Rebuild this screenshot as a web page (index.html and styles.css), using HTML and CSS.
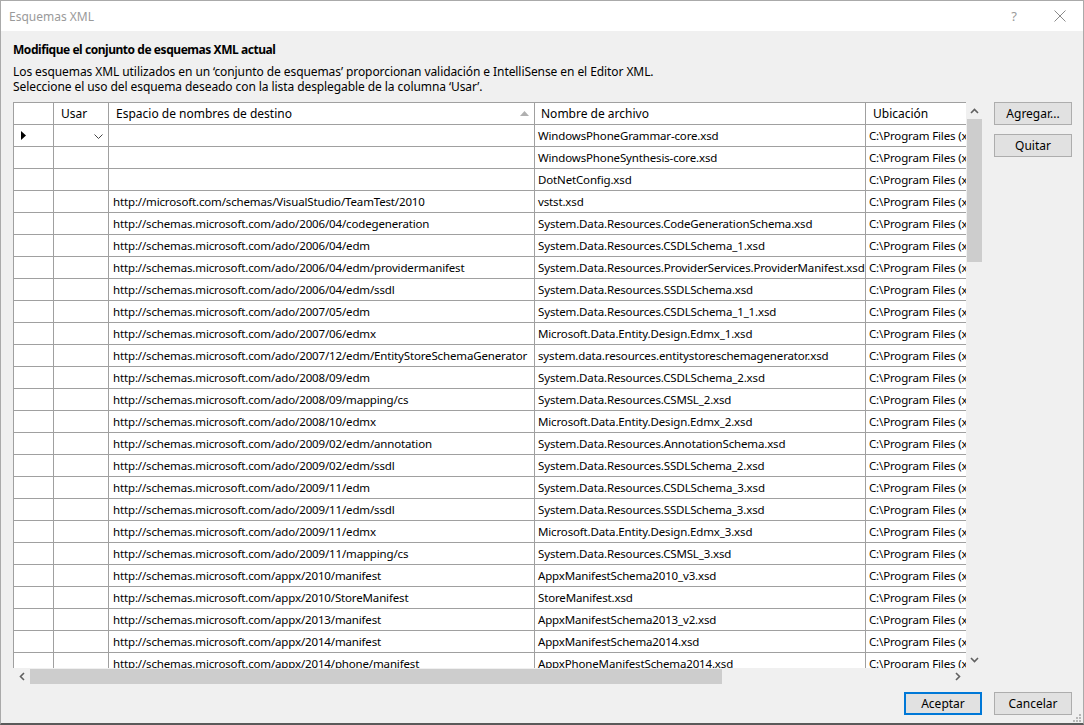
FILE: index.html
```html
<!DOCTYPE html>
<html lang="es">
<head>
<meta charset="utf-8">
<title>Esquemas XML</title>
<link rel="stylesheet" href="styles.css">
</head>
<body>
<div class="win">
  <div class="titlebar">
    <span class="title">Esquemas XML</span>
    <span class="tb-btn help">?</span>
    <span class="tb-btn close"><svg width="12" height="12" viewBox="0 0 12 12"><path d="M0.5 0.5 L11.5 11.5 M11.5 0.5 L0.5 11.5" stroke="#8a8a8a" stroke-width="1" fill="none"/></svg></span>
  </div>
  <div class="content">
    <div class="heading">Modifique el conjunto de esquemas XML actual</div>
    <div class="desc">Los esquemas XML utilizados en un ‘conjunto de esquemas’ proporcionan validación e IntelliSense en el Editor XML.<br>Seleccione el uso del esquema deseado con la lista desplegable de la columna ‘Usar’.</div>
    <div class="main">
      <div class="grid">
        <div class="gridtop">
          <div class="viewport">
            <div class="r hr">
              <div class="c c0"></div>
              <div class="c c1 h">Usar</div>
              <div class="c c2 h sortcol">Espacio de nombres de destino<svg class="sort" width="9" height="5" viewBox="0 0 9 5"><path d="M0 5 L4.5 0 L9 5 Z" fill="#b0b0b0"/></svg></div>
              <div class="c c3 h">Nombre de archivo</div>
              <div class="c c4 h">Ubicación</div>
            </div>
            <div class="r"><div class="c c0 cur"><svg width="5" height="9" viewBox="0 0 5 9"><path d="M0 0 L5 4.5 L0 9 Z" fill="#000"/></svg></div><div class="c c1 combo"><svg class="chev" width="9" height="5" viewBox="0 0 9 5"><path d="M0.5 0.5 L4.5 4.5 L8.5 0.5" stroke="#444" fill="none"/></svg></div><div class="c c2"></div><div class="c c3">WindowsPhoneGrammar-core.xsd</div><div class="c c4">C:\Program Files (x86)\Microsoft Visual Studio</div></div>
            <div class="r"><div class="c c0"></div><div class="c c1"></div><div class="c c2"></div><div class="c c3">WindowsPhoneSynthesis-core.xsd</div><div class="c c4">C:\Program Files (x86)\Microsoft Visual Studio</div></div>
            <div class="r"><div class="c c0"></div><div class="c c1"></div><div class="c c2"></div><div class="c c3">DotNetConfig.xsd</div><div class="c c4">C:\Program Files (x86)\Microsoft Visual Studio</div></div>
            <div class="r"><div class="c c0"></div><div class="c c1"></div><div class="c c2">http://microsoft.com/schemas/VisualStudio/TeamTest/2010</div><div class="c c3">vstst.xsd</div><div class="c c4">C:\Program Files (x86)\Microsoft Visual Studio</div></div>
            <div class="r"><div class="c c0"></div><div class="c c1"></div><div class="c c2">http://schemas.microsoft.com/ado/2006/04/codegeneration</div><div class="c c3">System.Data.Resources.CodeGenerationSchema.xsd</div><div class="c c4">C:\Program Files (x86)\Microsoft Visual Studio</div></div>
            <div class="r"><div class="c c0"></div><div class="c c1"></div><div class="c c2">http://schemas.microsoft.com/ado/2006/04/edm</div><div class="c c3">System.Data.Resources.CSDLSchema_1.xsd</div><div class="c c4">C:\Program Files (x86)\Microsoft Visual Studio</div></div>
            <div class="r"><div class="c c0"></div><div class="c c1"></div><div class="c c2">http://schemas.microsoft.com/ado/2006/04/edm/providermanifest</div><div class="c c3">System.Data.Resources.ProviderServices.ProviderManifest.xsd</div><div class="c c4">C:\Program Files (x86)\Microsoft Visual Studio</div></div>
            <div class="r"><div class="c c0"></div><div class="c c1"></div><div class="c c2">http://schemas.microsoft.com/ado/2006/04/edm/ssdl</div><div class="c c3">System.Data.Resources.SSDLSchema.xsd</div><div class="c c4">C:\Program Files (x86)\Microsoft Visual Studio</div></div>
            <div class="r"><div class="c c0"></div><div class="c c1"></div><div class="c c2">http://schemas.microsoft.com/ado/2007/05/edm</div><div class="c c3">System.Data.Resources.CSDLSchema_1_1.xsd</div><div class="c c4">C:\Program Files (x86)\Microsoft Visual Studio</div></div>
            <div class="r"><div class="c c0"></div><div class="c c1"></div><div class="c c2">http://schemas.microsoft.com/ado/2007/06/edmx</div><div class="c c3">Microsoft.Data.Entity.Design.Edmx_1.xsd</div><div class="c c4">C:\Program Files (x86)\Microsoft Visual Studio</div></div>
            <div class="r"><div class="c c0"></div><div class="c c1"></div><div class="c c2">http://schemas.microsoft.com/ado/2007/12/edm/EntityStoreSchemaGenerator</div><div class="c c3">system.data.resources.entitystoreschemagenerator.xsd</div><div class="c c4">C:\Program Files (x86)\Microsoft Visual Studio</div></div>
            <div class="r"><div class="c c0"></div><div class="c c1"></div><div class="c c2">http://schemas.microsoft.com/ado/2008/09/edm</div><div class="c c3">System.Data.Resources.CSDLSchema_2.xsd</div><div class="c c4">C:\Program Files (x86)\Microsoft Visual Studio</div></div>
            <div class="r"><div class="c c0"></div><div class="c c1"></div><div class="c c2">http://schemas.microsoft.com/ado/2008/09/mapping/cs</div><div class="c c3">System.Data.Resources.CSMSL_2.xsd</div><div class="c c4">C:\Program Files (x86)\Microsoft Visual Studio</div></div>
            <div class="r"><div class="c c0"></div><div class="c c1"></div><div class="c c2">http://schemas.microsoft.com/ado/2008/10/edmx</div><div class="c c3">Microsoft.Data.Entity.Design.Edmx_2.xsd</div><div class="c c4">C:\Program Files (x86)\Microsoft Visual Studio</div></div>
            <div class="r"><div class="c c0"></div><div class="c c1"></div><div class="c c2">http://schemas.microsoft.com/ado/2009/02/edm/annotation</div><div class="c c3">System.Data.Resources.AnnotationSchema.xsd</div><div class="c c4">C:\Program Files (x86)\Microsoft Visual Studio</div></div>
            <div class="r"><div class="c c0"></div><div class="c c1"></div><div class="c c2">http://schemas.microsoft.com/ado/2009/02/edm/ssdl</div><div class="c c3">System.Data.Resources.SSDLSchema_2.xsd</div><div class="c c4">C:\Program Files (x86)\Microsoft Visual Studio</div></div>
            <div class="r"><div class="c c0"></div><div class="c c1"></div><div class="c c2">http://schemas.microsoft.com/ado/2009/11/edm</div><div class="c c3">System.Data.Resources.CSDLSchema_3.xsd</div><div class="c c4">C:\Program Files (x86)\Microsoft Visual Studio</div></div>
            <div class="r"><div class="c c0"></div><div class="c c1"></div><div class="c c2">http://schemas.microsoft.com/ado/2009/11/edm/ssdl</div><div class="c c3">System.Data.Resources.SSDLSchema_3.xsd</div><div class="c c4">C:\Program Files (x86)\Microsoft Visual Studio</div></div>
            <div class="r"><div class="c c0"></div><div class="c c1"></div><div class="c c2">http://schemas.microsoft.com/ado/2009/11/edmx</div><div class="c c3">Microsoft.Data.Entity.Design.Edmx_3.xsd</div><div class="c c4">C:\Program Files (x86)\Microsoft Visual Studio</div></div>
            <div class="r"><div class="c c0"></div><div class="c c1"></div><div class="c c2">http://schemas.microsoft.com/ado/2009/11/mapping/cs</div><div class="c c3">System.Data.Resources.CSMSL_3.xsd</div><div class="c c4">C:\Program Files (x86)\Microsoft Visual Studio</div></div>
            <div class="r"><div class="c c0"></div><div class="c c1"></div><div class="c c2">http://schemas.microsoft.com/appx/2010/manifest</div><div class="c c3">AppxManifestSchema2010_v3.xsd</div><div class="c c4">C:\Program Files (x86)\Microsoft Visual Studio</div></div>
            <div class="r"><div class="c c0"></div><div class="c c1"></div><div class="c c2">http://schemas.microsoft.com/appx/2010/StoreManifest</div><div class="c c3">StoreManifest.xsd</div><div class="c c4">C:\Program Files (x86)\Microsoft Visual Studio</div></div>
            <div class="r"><div class="c c0"></div><div class="c c1"></div><div class="c c2">http://schemas.microsoft.com/appx/2013/manifest</div><div class="c c3">AppxManifestSchema2013_v2.xsd</div><div class="c c4">C:\Program Files (x86)\Microsoft Visual Studio</div></div>
            <div class="r"><div class="c c0"></div><div class="c c1"></div><div class="c c2">http://schemas.microsoft.com/appx/2014/manifest</div><div class="c c3">AppxManifestSchema2014.xsd</div><div class="c c4">C:\Program Files (x86)\Microsoft Visual Studio</div></div>
            <div class="r"><div class="c c0"></div><div class="c c1"></div><div class="c c2">http://schemas.microsoft.com/appx/2014/phone/manifest</div><div class="c c3">AppxPhoneManifestSchema2014.xsd</div><div class="c c4">C:\Program Files (x86)\Microsoft Visual Studio</div></div>
          </div>
          <div class="vscroll">
            <div class="arrow"><svg width="9" height="6" viewBox="0 0 9 6"><path d="M1 5 L4.5 1.5 L8 5" stroke="#606060" stroke-width="1.6" fill="none"/></svg></div>
            <div class="vthumb"></div>
            <div class="vtrack"></div>
            <div class="arrow"><svg width="9" height="6" viewBox="0 0 9 6"><path d="M1 1 L4.5 4.5 L8 1" stroke="#606060" stroke-width="1.6" fill="none"/></svg></div>
          </div>
        </div>
        <div class="hscroll">
          <div class="arrow"><svg width="6" height="9" viewBox="0 0 6 9"><path d="M5 1 L1.5 4.5 L5 8" stroke="#606060" stroke-width="1.6" fill="none"/></svg></div>
          <div class="hthumb"></div>
          <div class="htrack"></div>
          <div class="arrow"><svg width="6" height="9" viewBox="0 0 6 9"><path d="M1 1 L4.5 4.5 L1 8" stroke="#606060" stroke-width="1.6" fill="none"/></svg></div>
          <div class="corner"></div>
        </div>
      </div>
      <div class="side">
        <button class="btn">Agregar...</button>
        <button class="btn">Quitar</button>
      </div>
    </div>
    <div class="footer">
      <button class="btn primary">Aceptar</button>
      <button class="btn">Cancelar</button>
    </div>
  </div>
  <svg class="grip" width="8" height="8" viewBox="0 0 8 8"><g fill="#b8b8b8"><rect x="6" y="0" width="2" height="2"/><rect x="3" y="3" width="2" height="2"/><rect x="6" y="3" width="2" height="2"/><rect x="0" y="6" width="2" height="2"/><rect x="3" y="6" width="2" height="2"/><rect x="6" y="6" width="2" height="2"/></g></svg>
</div>
</body>
</html>
```

FILE: styles.css
```css
html, body {
  margin: 0;
  padding: 0;
}
body {
  width: 1084px;
  height: 725px;
  overflow: hidden;
  font-family: "Segoe UI", "Noto Sans", "Liberation Sans", sans-serif;
  font-size: 12px;
  color: #000;
}
.win {
  box-sizing: border-box;
  width: 1084px;
  height: 725px;
  border: 1px solid #aaaaaa;
  border-bottom: 2px solid #5a5a5a;
  background: #f0f0f0;
  display: flex;
  flex-direction: column;
  position: relative;
}
.titlebar {
  height: 30px;
  flex: none;
  background: #fff;
  display: flex;
  align-items: center;
}
.title {
  padding-left: 8px;
  color: #9a9a9a;
  flex: 1;
}
.tb-btn {
  width: 46px;
  height: 30px;
  display: flex;
  align-items: center;
  justify-content: center;
  color: #9a9a9a;
}
.help {
  font-size: 13px;
}
.content {
  flex: 1;
  padding: 11px 11px 0 12px;
  display: flex;
  flex-direction: column;
}
.heading {
  font-weight: bold;
  line-height: 16px;
  letter-spacing: -0.45px;
}
.desc {
  margin-top: 6px;
  line-height: 15px;
  letter-spacing: -0.08px;
}
.main {
  margin-top: 8px;
  display: flex;
  height: 583px;
  flex: none;
}
.grid {
  width: 970px;
  display: flex;
  flex-direction: column;
  flex: none;
}
.gridtop {
  display: flex;
  height: 566px;
}
.viewport {
  width: 953px;
  height: 566px;
  overflow: hidden;
  background: #fff;
}
.r {
  display: flex;
  height: 22px;
  box-sizing: border-box;
  border-bottom: 1px solid #a0a0a0;
  background: #fff;
  font-size: 11.5px;
  letter-spacing: -0.15px;
}
.hr {
  height: 23px;
  border-top: 1px solid #a0a0a0;
  font-size: 12px;
  letter-spacing: 0;
}
.c {
  flex: none;
  box-sizing: border-box;
  border-left: 1px solid #a0a0a0;
  line-height: 21px;
  white-space: nowrap;
  overflow: hidden;
  padding-left: 4px;
}
.c0 { width: 40px; padding-left: 0; }
.c1 { width: 55px; }
.c2 { width: 426px; }
.c3 { width: 331px; padding-left: 3px; }
.c4 { width: 200px; padding-left: 3px; }
.h { padding-left: 7px; }
.c3.h { padding-left: 6px; }
.sortcol {
  position: relative;
}
.sort {
  position: absolute;
  right: 5px;
  top: 8px;
}
.cur {
  display: flex;
  align-items: center;
  padding-left: 7px;
}
.combo {
  position: relative;
}
.combo::after {
  content: "";
  position: absolute;
  left: -1px;
  top: -1px;
  right: -1px;
  bottom: -1px;
  border: 1px solid #7a7a7a;
}
.chev {
  position: absolute;
  right: 5px;
  top: 9px;
}
.vscroll {
  width: 17px;
  background: #f0f0f0;
  display: flex;
  flex-direction: column;
}
.vscroll .arrow {
  height: 17px;
  display: flex;
  align-items: center;
  justify-content: center;
  flex: none;
}
.vthumb {
  height: 143px;
  margin: 0 1px;
  background: #cdcdcd;
  flex: none;
}
.vtrack { flex: 1; }
.hscroll {
  height: 17px;
  display: flex;
  background: #f0f0f0;
}
.hscroll .arrow {
  width: 17px;
  display: flex;
  align-items: center;
  justify-content: center;
  flex: none;
}
.hthumb {
  width: 692px;
  margin: 1px 0;
  background: #cdcdcd;
  flex: none;
}
.htrack { flex: 1; }
.corner { width: 17px; flex: none; }
.side {
  margin-left: 11px;
  display: flex;
  flex-direction: column;
  gap: 9px;
}
.btn {
  width: 78px;
  height: 23px;
  box-sizing: border-box;
  background: #e1e1e1;
  border: 1px solid #adadad;
  font-family: inherit;
  font-size: 12px;
  color: #000;
  padding: 0;
  margin: 0;
  white-space: nowrap;
}
.primary {
  border: 2px solid #0078d7;
}
.footer {
  margin-top: 7px;
  display: flex;
  justify-content: flex-end;
  gap: 12px;
}
.grip {
  position: absolute;
  right: 2px;
  bottom: 1px;
}
```
